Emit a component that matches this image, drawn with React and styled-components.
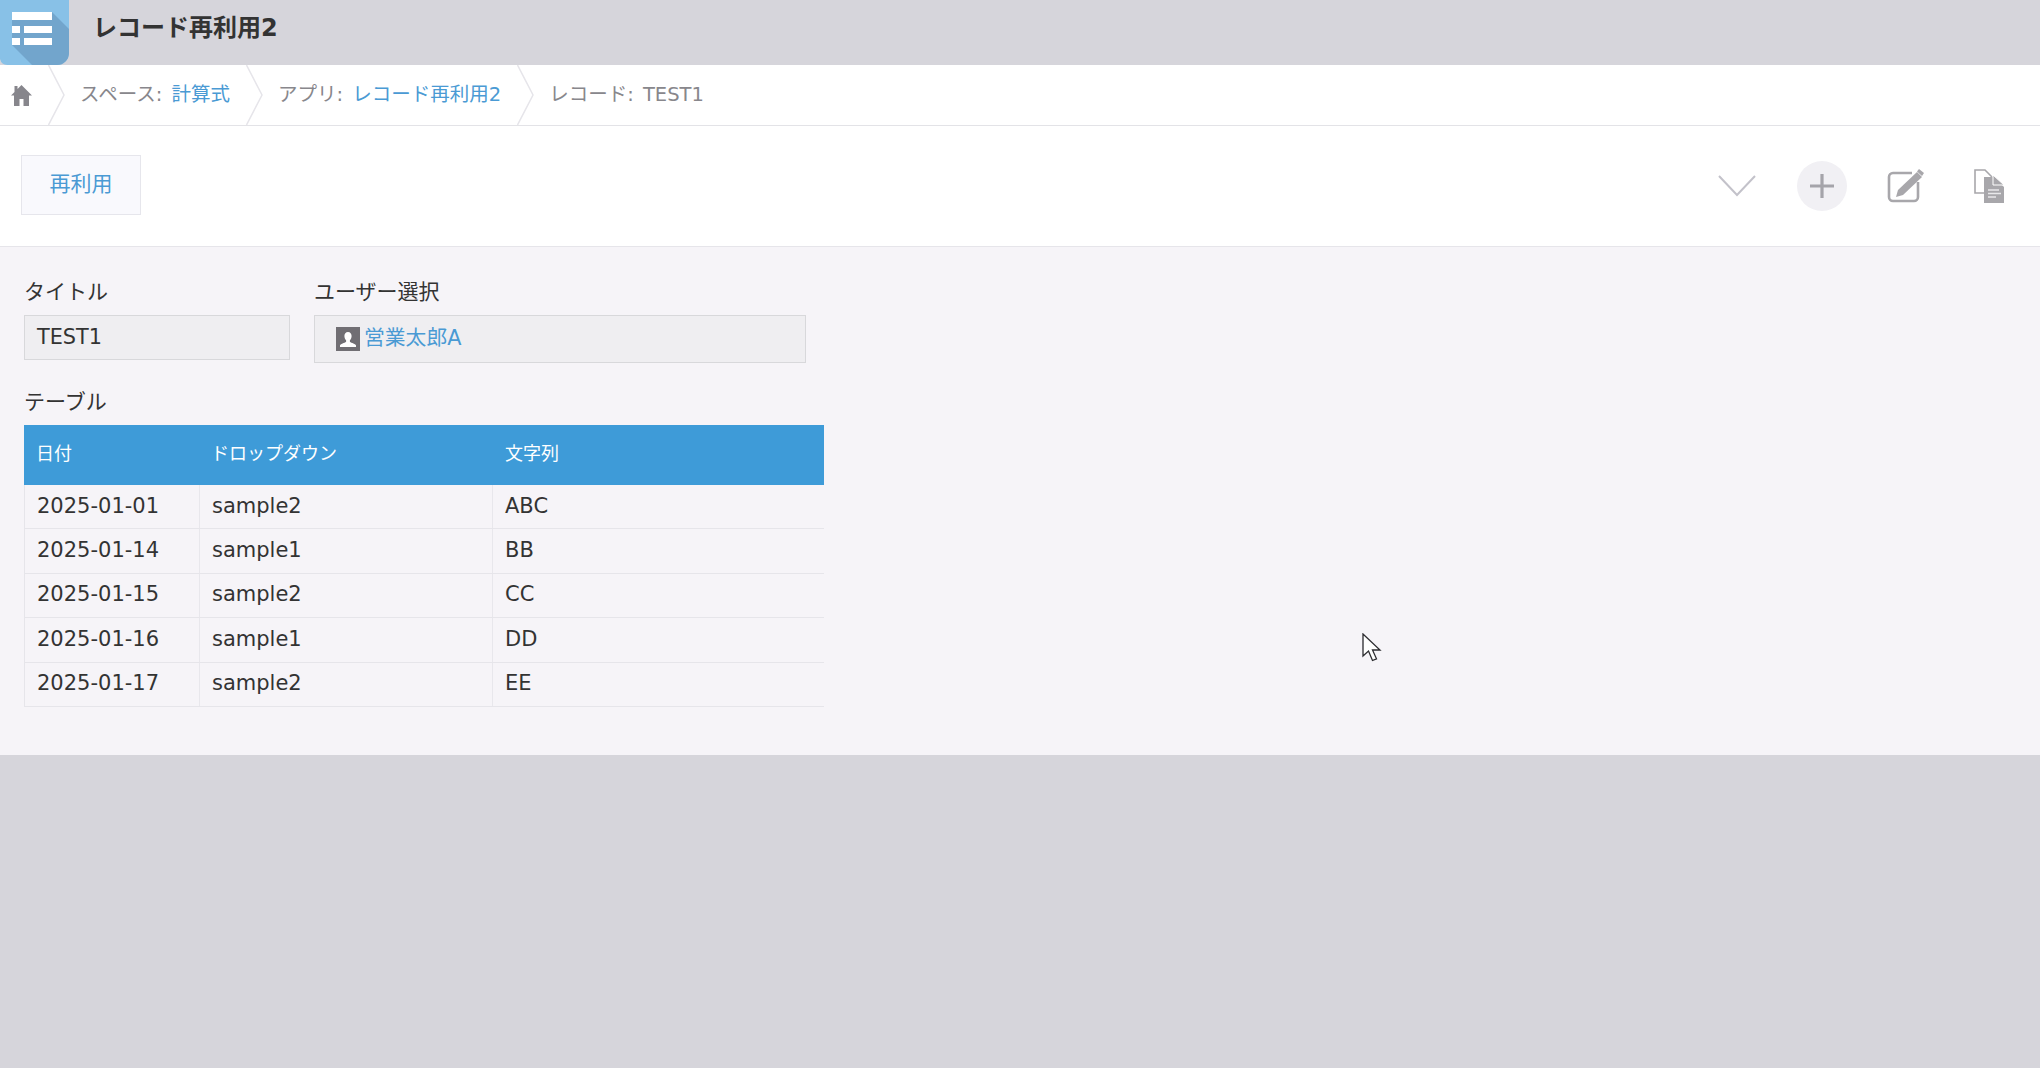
import React from "react";
import styled, { createGlobalStyle } from "styled-components";

const GlobalStyle = createGlobalStyle`
  html, body {
    margin: 0;
    padding: 0;
    background: #d6d5db;
  }
  body {
    font-family: "DejaVu Sans", "Noto Sans CJK JP", sans-serif;
    color: #333;
  }
`;

const rows = [
  { date: "2025-01-01", drop: "sample2", text: "ABC" },
  { date: "2025-01-14", drop: "sample1", text: "BB" },
  { date: "2025-01-15", drop: "sample2", text: "CC" },
  { date: "2025-01-16", drop: "sample1", text: "DD" },
  { date: "2025-01-17", drop: "sample2", text: "EE" },
];

function LogoIcon() {
  return (
    <svg width="69" height="65" viewBox="0 0 69 65">
      <defs>
        <clipPath id="logoClip">
          <path d="M0 0H69V53a12 12 0 0 1-12 12H8a8 8 0 0 1-8-6Z" />
        </clipPath>
      </defs>
      <g clipPath="url(#logoClip)">
        <rect width="69" height="65" fill="#88c1e7" />
        <path d="M52 12L69 29V65H32L12 45H52Z" fill="#72a5cc" />
        <path d="M12 20H52V45H12Z" fill="#72a5cc" />
        <path d="M12 12H52V20H12ZM12 26H20V33H12ZM24 26H52V33H24ZM12 38H20V45H12ZM24 38H52V45H24Z" fill="#fff" />
      </g>
    </svg>
  );
}

function HomeIcon() {
  return (
    <svg width="21" height="22" viewBox="0 0 21 22">
      <path
        d="M10.5 1L21 11.5H18V22H12.5V15H8.5V22H3V11.5H0L3.5 8V2H6.5V5Z"
        fill="#87868c"
      />
    </svg>
  );
}

function CrumbSeparator() {
  return (
    <svg width="17" height="60" viewBox="0 0 17 60">
      <path d="M0.5 0L16 30L0.5 60" fill="none" stroke="#e6e5ea" strokeWidth="1.5" />
    </svg>
  );
}

function ChevronIcon() {
  return (
    <svg width="38" height="22" viewBox="0 0 38 22">
      <path d="M1 1L19 20L37 1" fill="none" stroke="#c3c2ca" strokeWidth="2" />
    </svg>
  );
}

function PlusIcon() {
  return (
    <svg width="26" height="26" viewBox="0 0 26 26">
      <path d="M13 1V25M1 13H25" fill="none" stroke="#a5a4aa" strokeWidth="3.2" />
    </svg>
  );
}

function EditIcon() {
  return (
    <svg width="37" height="34" viewBox="0 0 37 34">
      <path
        d="M25 4H6a4 4 0 0 0-4 4V28a4 4 0 0 0 4 4H27a4 4 0 0 0 4-4V13"
        fill="none"
        stroke="#a8a7ab"
        strokeWidth="2.6"
      />
      <path d="M30 3L35 8L16 26L9 28L11 21Z" fill="#a8a7ab" />
      <path d="M32 0L37 4L35 7L30 2.5Z" fill="#a8a7ab" />
    </svg>
  );
}

function DocIcon() {
  return (
    <svg width="32" height="34" viewBox="0 0 32 34">
      <path d="M1 1H11L18 8V24H1Z" fill="#fff" stroke="#a8a7ab" strokeWidth="1.6" />
      <path d="M10 8H20V1L20 8L30 18V34H10Z" fill="#a8a7ab" />
      <path d="M19 6L30 16H19Z" fill="#a8a7ab" stroke="#fff" strokeWidth="1" />
      <path d="M14 21H25M14 24.5H27M14 28H22" fill="none" stroke="#e8e8ea" strokeWidth="1.4" />
    </svg>
  );
}

function UserIcon() {
  return (
    <svg width="24" height="24" viewBox="0 0 24 24">
      <rect width="24" height="24" fill="#706e73" />
      <path
        d="M12 5c2.300 0 3.600 1.700 3.600 4 0 1.800-.8 3.400-1.700 4.300v1.500c0 .8 4.600 1.500 6.100 3.400V20H4v-1.800c1.500-1.900 6.100-2.600 6.100-3.400v-1.500c-.9-.9-1.700-2.500-1.700-4.300C8.400 6.700 9.700 5 12 5Z"
        fill="#fff"
      />
    </svg>
  );
}

export default function App() {
  return (
    <>
      <GlobalStyle />
      <Page>
        <Header>
          <LogoIcon />
          <AppTitle>レコード再利用2</AppTitle>
        </Header>

        <Breadcrumb>
          <HomeLink>
            <HomeIcon />
          </HomeLink>
          <CrumbSeparator />
          <Crumb>
            スペース: <CrumbLink>計算式</CrumbLink>
          </Crumb>
          <CrumbSeparator />
          <Crumb>
            アプリ: <CrumbLink>レコード再利用2</CrumbLink>
          </Crumb>
          <CrumbSeparator />
          <Crumb>レコード: TEST1</Crumb>
        </Breadcrumb>

        <Toolbar>
          <ReuseButton>再利用</ReuseButton>
          <ToolIcons>
            <ChevronSlot>
              <ChevronIcon />
            </ChevronSlot>
            <AddButton>
              <PlusIcon />
            </AddButton>
            <EditSlot>
              <EditIcon />
            </EditSlot>
            <DocSlot>
              <DocIcon />
            </DocSlot>
          </ToolIcons>
        </Toolbar>

        <Content>
          <FieldRow>
            <Field>
              <FieldLabel>タイトル</FieldLabel>
              <TitleValue>TEST1</TitleValue>
            </Field>
            <Field>
              <FieldLabel>ユーザー選択</FieldLabel>
              <UserValue>
                <UserIcon />
                <UserName>営業太郎A</UserName>
              </UserValue>
            </Field>
          </FieldRow>

          <TableLabel>テーブル</TableLabel>
          <Table>
            <HeadRow>
              <HeadCell>日付</HeadCell>
              <HeadCell>ドロップダウン</HeadCell>
              <HeadCell>文字列</HeadCell>
            </HeadRow>
            {rows.map((row) => (
              <BodyRow key={row.date}>
                <BodyCell>{row.date}</BodyCell>
                <BodyCell>{row.drop}</BodyCell>
                <BodyCell>{row.text}</BodyCell>
              </BodyRow>
            ))}
          </Table>

          <MouseCursor viewBox="0 0 20 30" width="20" height="30">
            <path
              d="M1 1V23L6.500 18L10.500 27.500L14.500 25.800L10.500 17H18Z"
              fill="#fff"
              stroke="#2c2c30"
              strokeWidth="1.300"
            />
          </MouseCursor>
        </Content>
      </Page>
    </>
  );
}

const Page = styled.div`
  width: 2040px;
  height: 1068px;
  overflow: hidden;
  background: #d6d5db;
`;

const Header = styled.div`
  height: 65px;
  display: flex;
  align-items: center;
  gap: 24px;
  background: #d6d5db;
`;

const AppTitle = styled.h1`
  margin: 0 0 15px;
  font-size: 24px;
  font-weight: 700;
  color: #333;
`;

const Breadcrumb = styled.nav`
  height: 60px;
  display: flex;
  align-items: center;
  gap: 16px;
  padding-left: 11px;
  background: #fff;
  border-bottom: 1px solid #e3e3e7;
`;

const HomeLink = styled.span`
  display: flex;
`;

const Crumb = styled.span`
  margin: 0 0 6px -1px;
  font-size: 19.5px;
  word-spacing: 3px;
  color: #88878c;
  white-space: nowrap;
`;

const CrumbLink = styled.span`
  color: #4a9ad4;
`;

const Toolbar = styled.div`
  height: 121px;
  box-sizing: border-box;
  display: flex;
  justify-content: space-between;
  align-items: flex-start;
  padding: 29px 34px 0 21px;
  background: #fff;
  border-bottom: 1px solid #e6e5ea;
`;

const ReuseButton = styled.button`
  width: 120px;
  height: 60px;
  padding: 0 0 6px;
  font-family: inherit;
  font-size: 21px;
  color: #4a9ad4;
  background: #f9f9fd;
  border: 1px solid #e6e6ec;
`;

const ToolIcons = styled.div`
  height: 62px;
  display: flex;
  align-items: center;
`;

const ChevronSlot = styled.div`
  display: flex;
  margin-right: 41px;
`;

const AddButton = styled.div`
  width: 50px;
  height: 50px;
  border-radius: 50%;
  display: flex;
  align-items: center;
  justify-content: center;
  background: #f1f0f4;
  margin-right: 40px;
`;

const EditSlot = styled.div`
  display: flex;
  margin-right: 50px;
`;

const DocSlot = styled.div`
  display: flex;
`;

const Content = styled.main`
  position: relative;
  height: 508px;
  box-sizing: border-box;
  padding: 29px 0 0 24px;
  background: #f6f4f8;
`;

const FieldRow = styled.div`
  display: flex;
  align-items: flex-start;
  gap: 24px;
  margin-bottom: 24px;
`;

const Field = styled.div`
  display: flex;
  flex-direction: column;
`;

const FieldLabel = styled.div`
  height: 30px;
  margin-bottom: 9px;
  font-size: 21px;
  line-height: 32px;
  color: #333;
`;

const TableLabel = styled(FieldLabel)`
  margin-bottom: 8px;
  line-height: 31px;
`;

const TitleValue = styled.div`
  width: 266px;
  height: 45px;
  box-sizing: border-box;
  padding: 0 12px 1px;
  display: flex;
  align-items: center;
  font-size: 20.8px;
  background: #efeef1;
  border: 1px solid #d8d8db;
`;

const UserValue = styled.div`
  width: 492px;
  height: 48px;
  box-sizing: border-box;
  padding: 11px 0 0 21px;
  display: flex;
  align-items: flex-start;
  gap: 4px;
  background: #efeef1;
  border: 1px solid #d8d8db;
`;

const UserName = styled.span`
  margin-top: -6px;
  font-size: 20.8px;
  color: #4a9ad4;
`;

const Table = styled.div`
  width: 800px;
`;

const HeadRow = styled.div`
  height: 60px;
  display: grid;
  grid-template-columns: 175px 294px 331px;
  background: #3e9bd8;
`;

const HeadCell = styled.div`
  padding: 0 0 6px 12px;
  display: flex;
  align-items: center;
  font-size: 18px;
  color: #fff;
`;

const BodyRow = styled.div`
  height: 44.4px;
  box-sizing: border-box;
  display: grid;
  grid-template-columns: 174px 293px 332px;
  border-bottom: 1px solid #e6e5ea;
  border-left: 1px solid #e6e5ea;
`;

const BodyCell = styled.div`
  padding: 0 0 2px 12px;
  display: flex;
  align-items: center;
  font-size: 21px;
  color: #333;
  & + & {
    border-left: 1px solid #e8e7ec;
  }
`;

const MouseCursor = styled.svg`
  position: absolute;
  left: 1362px;
  top: 386px;
`;
